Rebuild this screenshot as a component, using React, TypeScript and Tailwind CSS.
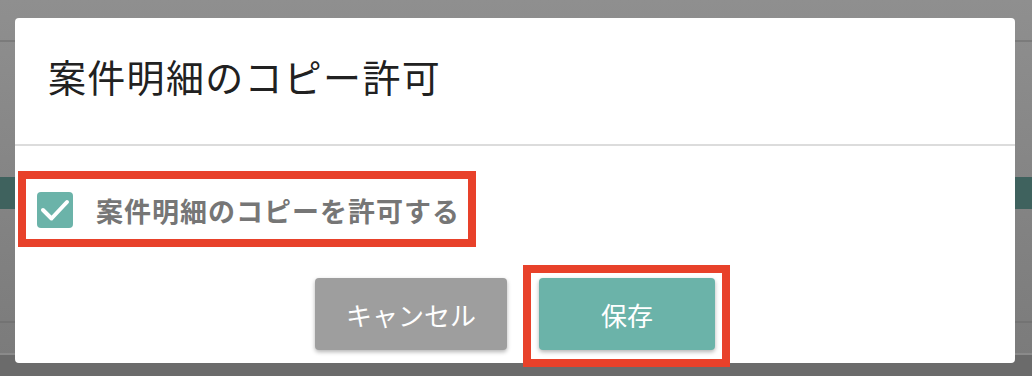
import React from "react";

const jp = { fontFamily: '"Noto Sans CJK JP", "Noto Sans", sans-serif' };

function CheckIcon() {
  return (
    <svg viewBox="0 0 36 36" className="h-[36px] w-[36px]">
      <rect x="0" y="0" width="36" height="36" rx="4" fill="#6bb3a9" />
      <polyline points="6,18 14.5,26.5 30,10" fill="none" stroke="#fff" strokeWidth="4" strokeLinecap="round" strokeLinejoin="round" />
    </svg>
  );
}

export default function App() {
  return (
    <div className="relative h-[376px] w-[1032px] overflow-hidden bg-gradient-to-b from-[#8f8f8f] to-[#7a7a7a]" style={jp}>
      {/* page behind the backdrop */}
      <div className="flex h-full flex-col">
        <div className="h-[42px] border-b-2 border-[#7b7b7b]" />
        <div className="mt-[135px] h-[32px] bg-[#3f625e]" />
        <div className="mt-[112px] h-[34px] border-t-2 border-b-2 border-[#737373] border-b-[#8a8a8a]" />
        <div className="flex-1 bg-[#6b6b6b]" />
      </div>

      {/* dialog */}
      <div className="absolute left-[15px] top-[18px] flex h-[345px] w-[1000px] flex-col rounded-[4px] bg-white">
        <div className="flex h-[128px] items-center border-b-2 border-[#dcdcdc] pl-[33px]">
          <h2 className="pb-[10px] text-[38px] font-normal leading-none tracking-[1.3px] text-[#212121]">案件明細のコピー許可</h2>
        </div>
        <div className="flex items-center gap-[23px] pl-[22px] pt-[46px]">
          <CheckIcon />
          <span className="text-[27px] font-bold leading-none tracking-[1px] text-[#767676]">案件明細のコピーを許可する</span>
        </div>
        <div className="mt-[50px] flex justify-center gap-[32px]">
          <button className="h-[72px] w-[192px] rounded-[4px] bg-[#9e9e9e] text-[26px] text-white shadow-[0_2px_4px_rgba(0,0,0,0.3)]">キャンセル</button>
          <button className="h-[72px] w-[176px] rounded-[4px] bg-[#6bb3a9] text-[26px] text-white shadow-[0_2px_4px_rgba(0,0,0,0.3)]">保存</button>
        </div>
      </div>

      {/* annotation frames */}
      <div className="absolute left-[18px] top-[171px] h-[76px] w-[458px] border-[8px] border-[#e8412a]" />
      <div className="absolute left-[523px] top-[265px] h-[102px] w-[207px] border-[8px] border-[#e8412a]" />
    </div>
  );
}
